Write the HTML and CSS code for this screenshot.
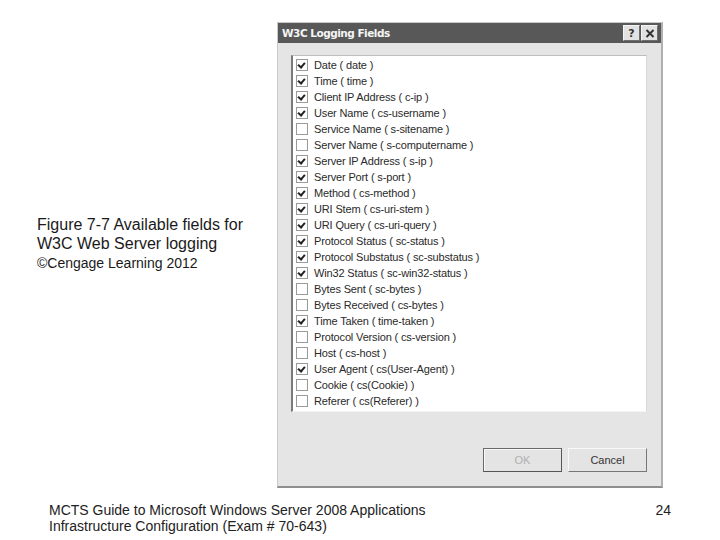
FILE: index.html
```html
<!DOCTYPE html>
<html>
<head>
<meta charset="utf-8">
<link rel="stylesheet" href="styles.css">
</head>
<body>
<main class="slide">
  <div class="top">
    <div class="caption">
      <p class="cap-title">Figure 7-7 Available fields for<br>W3C Web Server logging</p>
      <p class="cap-credit">©Cengage Learning 2012</p>
    </div>
    <div class="dialog">
      <div class="titlebar">
        <span class="title">W3C Logging Fields</span>
        <span class="tb-buttons">
          <span class="tb-btn">?</span>
          <span class="tb-btn">
            <svg width="10" height="9" viewBox="0 0 10 9"><path d="M1.5 1 L8.5 8 M8.5 1 L1.5 8" stroke="#333" stroke-width="2"/></svg>
          </span>
        </span>
      </div>
      <div class="body">
        <ul class="list">
          <li><span class="cb on"></span>Date ( date )</li>
          <li><span class="cb on"></span>Time ( time )</li>
          <li><span class="cb on"></span>Client IP Address ( c-ip )</li>
          <li><span class="cb on"></span>User Name ( cs-username )</li>
          <li><span class="cb"></span>Service Name ( s-sitename )</li>
          <li><span class="cb"></span>Server Name ( s-computername )</li>
          <li><span class="cb on"></span>Server IP Address ( s-ip )</li>
          <li><span class="cb on"></span>Server Port ( s-port )</li>
          <li><span class="cb on"></span>Method ( cs-method )</li>
          <li><span class="cb on"></span>URI Stem ( cs-uri-stem )</li>
          <li><span class="cb on"></span>URI Query ( cs-uri-query )</li>
          <li><span class="cb on"></span>Protocol Status ( sc-status )</li>
          <li><span class="cb on"></span>Protocol Substatus ( sc-substatus )</li>
          <li><span class="cb on"></span>Win32 Status ( sc-win32-status )</li>
          <li><span class="cb"></span>Bytes Sent ( sc-bytes )</li>
          <li><span class="cb"></span>Bytes Received ( cs-bytes )</li>
          <li><span class="cb on"></span>Time Taken ( time-taken )</li>
          <li><span class="cb"></span>Protocol Version ( cs-version )</li>
          <li><span class="cb"></span>Host ( cs-host )</li>
          <li><span class="cb on"></span>User Agent ( cs(User-Agent) )</li>
          <li><span class="cb"></span>Cookie ( cs(Cookie) )</li>
          <li><span class="cb"></span>Referer ( cs(Referer) )</li>
        </ul>
        <div class="buttons">
          <span class="btn disabled">OK</span>
          <span class="btn">Cancel</span>
        </div>
      </div>
    </div>
  </div>
  <footer class="footer">
    <p class="foot-text">MCTS Guide to Microsoft Windows Server 2008 Applications<br>Infrastructure Configuration (Exam # 70-643)</p>
    <p class="page-num">24</p>
  </footer>
</main>
</body>
</html>
```
FILE: styles.css
```css
html, body {
  margin: 0;
  padding: 0;
  background: #ffffff;
}
.slide {
  width: 720px;
  height: 540px;
  display: flex;
  flex-direction: column;
  font-family: "Liberation Sans", Arial, sans-serif;
  color: #222;
}
.top {
  display: grid;
  grid-template-columns: 240px 386px;
  padding-left: 37px;
  padding-top: 22px;
}
.caption {
  padding-top: 193px;
}
.cap-title {
  margin: 0;
  font-size: 16px;
  line-height: 19px;
  color: #1a1a1a;
}
.cap-credit {
  margin: 2px 0 0;
  font-size: 14px;
  line-height: 17px;
  color: #1a1a1a;
}
.dialog {
  width: 386px;
  height: 466px;
  box-sizing: border-box;
  background: #e5e5e5;
  border: 1px solid #c9c9c9;
  border-bottom: 2px solid #8f8f8f;
  border-right: 2px solid #b0b0b0;
  display: flex;
  flex-direction: column;
}
.titlebar {
  height: 20px;
  background: #585858;
  display: flex;
  align-items: center;
  justify-content: space-between;
  padding: 0 3px 0 4px;
}
.title {
  color: #f4f4f4;
  font-family: "DejaVu Sans", Tahoma, sans-serif;
  font-weight: bold;
  font-size: 10.5px;
  letter-spacing: -0.5px;
}
.tb-buttons {
  display: flex;
  gap: 1px;
}
.tb-btn {
  width: 15px;
  height: 14px;
  background: #e2e2e2;
  border: 1px solid #f5f5f5;
  border-right-color: #6e6e6e;
  border-bottom-color: #6e6e6e;
  display: flex;
  align-items: center;
  justify-content: center;
  font-family: "DejaVu Sans", sans-serif;
  font-weight: bold;
  font-size: 11px;
  color: #333;
}
.body {
  flex: 1;
  display: flex;
  flex-direction: column;
  padding: 12px 14px 0 13px;
}
.list {
  list-style: none;
  margin: 0;
  padding: 1px 0 0 3px;
  height: 357px;
  box-sizing: border-box;
  background: #ffffff;
  border-top: 1px solid #bdbdbd;
  border-left: 2px solid #7a7a7a;
  border-right: 1px solid #d8d8d8;
  border-bottom: 1px solid #f4f4f4;
}
.list li {
  height: 16px;
  display: flex;
  align-items: center;
  font-size: 11px;
  letter-spacing: -0.15px;
  color: #2a2a2a;
  white-space: nowrap;
}
.cb {
  width: 10px;
  height: 10px;
  border: 1px solid #9a9a9a;
  background: #fff;
  margin-right: 6px;
  flex: none;
  position: relative;
}
.cb.on::after {
  content: "";
  position: absolute;
  left: 2px;
  top: 1px;
  width: 3px;
  height: 5px;
  border-right: 2px solid #222;
  border-bottom: 2px solid #222;
  transform: rotate(40deg);
}
.buttons {
  display: flex;
  justify-content: flex-end;
  gap: 6px;
  margin-top: 36px;
}
.btn {
  width: 79px;
  height: 24px;
  box-sizing: border-box;
  background: #e4e4e4;
  border: 1px solid #f8f8f8;
  border-right-color: #777;
  border-bottom-color: #777;
  display: flex;
  align-items: center;
  justify-content: center;
  font-size: 11px;
  color: #333;
}
.btn.disabled {
  color: #b0b0b0;
  border: 1px solid #6a6a6a;
  border-right-color: #555;
  border-bottom-color: #555;
  box-shadow: inset 1px 1px 0 #f8f8f8;
}
.footer {
  display: flex;
  justify-content: space-between;
  padding: 0 49px 0 49px;
  margin-top: 14px;
}
.foot-text, .page-num {
  margin: 0;
  font-size: 14px;
  line-height: 16px;
  color: #222;
}
```
